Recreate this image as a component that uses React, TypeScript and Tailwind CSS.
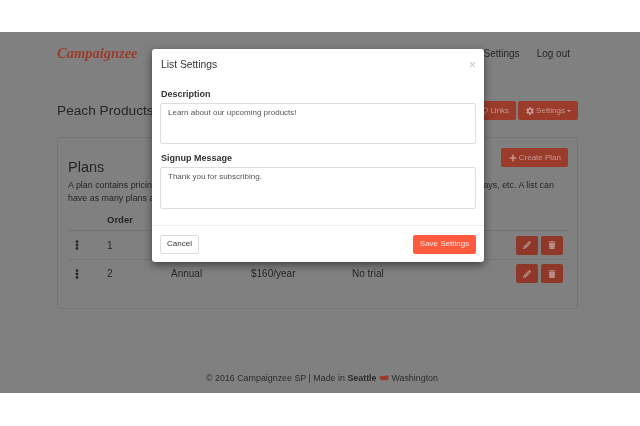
import { FaCog, FaEllipsisV, FaPencilAlt, FaPlus, FaRegHeart, FaTrash } from 'react-icons/fa';

// Row 1's plan details sit behind the modal in the picture
const plans = [
  { order: 1, name: '', price: '', trial: '', height: 'h-[29px]' },
  { order: 2, name: 'Annual', price: '$160/year', trial: 'No trial', height: 'h-[28px]' },
];

function PageButton({ children }: { children: React.ReactNode }) {
  return (
    <div className="h-[19px] flex items-center gap-[2px] pl-[8px] pr-[7px] rounded-[2px] bg-[#9a3b2b] text-[8px] text-[#c9988f]">
      {children}
    </div>
  );
}

function PlanRow({ plan }: { plan: (typeof plans)[number] }) {
  return (
    <div className={`${plan.height} flex items-center border-t border-[#757575] text-[10px] text-[#262626]`}>
      <div className="w-[39px] pl-[4px]">
        <FaEllipsisV className="w-[10px] h-[10px]" />
      </div>
      <div className="w-[64px]">{plan.order}</div>
      <div className="w-[80px]">{plan.name}</div>
      <div className="w-[101px]">{plan.price}</div>
      <div className="w-[164px]">{plan.trial}</div>
      <div className="flex gap-[3px]">
        <div className="w-[22px] h-[19px] rounded-[2px] bg-[#8f3728] flex items-center justify-center text-[#b98d85]">
          <FaPencilAlt className="w-[8px] h-[8px]" />
        </div>
        <div className="w-[22px] h-[19px] rounded-[2px] bg-[#8f3728] flex items-center justify-center text-[#b98d85]">
          <FaTrash className="w-[8px] h-[8px]" />
        </div>
      </div>
    </div>
  );
}

export default function App() {
  return (
    <div className="relative w-[640px] h-[426px] overflow-hidden bg-white flex flex-col font-['Liberation_Sans',sans-serif] blur-[0.4px]">
      <div className="h-[32px] shrink-0" />

      {/* Dimmed page */}
      <div className="h-[361px] shrink-0 bg-[#808080] pl-[57px] pr-[62px] flex flex-col text-[#262626]">
        <div className="h-[42px] flex items-center justify-between">
          <span className="font-['Liberation_Serif',serif] font-bold italic text-[14.5px] text-[#9a3b2b] leading-none">
            Campaignzee
          </span>
          <div className="flex gap-[17px] text-[10px] mr-[8px]">
            <span>Settings</span>
            <span>Log out</span>
          </div>
        </div>

        <div className="mt-[27px] h-[19px] flex items-center justify-between">
          <span className="text-[13.7px] leading-none">Peach Products</span>
          <div className="flex gap-[2px]">
            <PageButton>
              <FaRegHeart className="w-[8px] h-[8px]" /> Links
            </PageButton>
            <PageButton>
              <FaCog className="w-[8px] h-[8px]" /> Settings
              <span className="w-0 h-0 border-x-[2px] border-x-transparent border-t-[2px] border-t-[#c9988f]" />
            </PageButton>
          </div>
        </div>

        <div className="mt-[17px] h-[172px] border border-[#767676] rounded-[3px] pl-[10px] pr-[9px] pt-[10px]">
          <div className="flex items-start justify-between h-[26px]">
            <span className="mt-[12px] text-[14.5px] leading-[14px]">Plans</span>
            <PageButton>
              <FaPlus className="w-[8px] h-[8px]" /> Create Plan
            </PageButton>
          </div>
          <p className="mt-[5px] text-[8.9px] leading-[13px] h-[26px] whitespace-nowrap">
            A plan contains pricing information such as the amount, billing period, the trial length, the number of free days, etc. A list can
            <br />
            have as many plans as you like.
          </p>
          <div className="h-[25px] pt-[5px] flex items-center text-[9.5px] font-bold">
            <div className="w-[39px]" />
            <div>Order</div>
          </div>
          {plans.map(plan => (
            <PlanRow key={plan.order} plan={plan} />
          ))}
        </div>

        <div className="mt-[63px] pl-[9px] text-center text-[8.9px] text-[#2c2c2c]">
          © 2016 Campaignzee SP | Made in <b>Seattle</b>{' '}
          <svg viewBox="0 0 12 7" className="inline w-[10px] h-[6px] fill-[#9a3b2b] align-baseline">
            <path d="M1 0.5 L4 1.4 L11.5 0.3 L11.2 6 L5 6.5 L2.5 6 L0.5 4.5 Z" />
          </svg>{' '}
          Washington
        </div>
      </div>

      {/* List settings modal */}
      <div className="absolute left-[152px] top-[49px] w-[332px] h-[213px] bg-white rounded-[3px] shadow-[0_3px_9px_rgba(0,0,0,0.5)] flex flex-col text-[#333]">
        <div className="h-[30px] shrink-0 pl-[9px] pr-[8px] pt-[1px] flex items-center justify-between">
          <span className="text-[10.3px]">List Settings</span>
          <span className="text-[12px] text-[#c4c4c4] leading-none">×</span>
        </div>
        <div className="px-[8px] flex flex-col">
          <label className="mt-[9px] pl-px text-[9px] font-bold leading-[13px]">Description</label>
          <textarea
            readOnly
            className="mt-[2px] h-[41px] border border-[#ddd] rounded-[2px] px-[7px] py-[3px] text-[8px] leading-[12px] text-[#555] resize-none outline-none"
            value="Learn about our upcoming products!"
          />
          <label className="mt-[8px] pl-px text-[9px] font-bold leading-[13px]">Signup Message</label>
          <textarea
            readOnly
            className="mt-[2px] h-[42px] border border-[#ddd] rounded-[2px] px-[7px] py-[3px] text-[8px] leading-[12px] text-[#555] resize-none outline-none"
            value="Thank you for subscribing."
          />
        </div>
        <div className="mt-[16px] border-t border-[#eee] flex-1 px-[8px] flex items-center justify-between">
          <div className="h-[19px] w-[39px] flex items-center justify-center border border-[#ddd] rounded-[2px] text-[8px]">
            Cancel
          </div>
          <div className="h-[19px] w-[63px] flex items-center justify-center rounded-[2px] bg-[#ff5a3e] text-[8px] text-[#ffe5df]">
            Save Settings
          </div>
        </div>
      </div>
    </div>
  );
}
